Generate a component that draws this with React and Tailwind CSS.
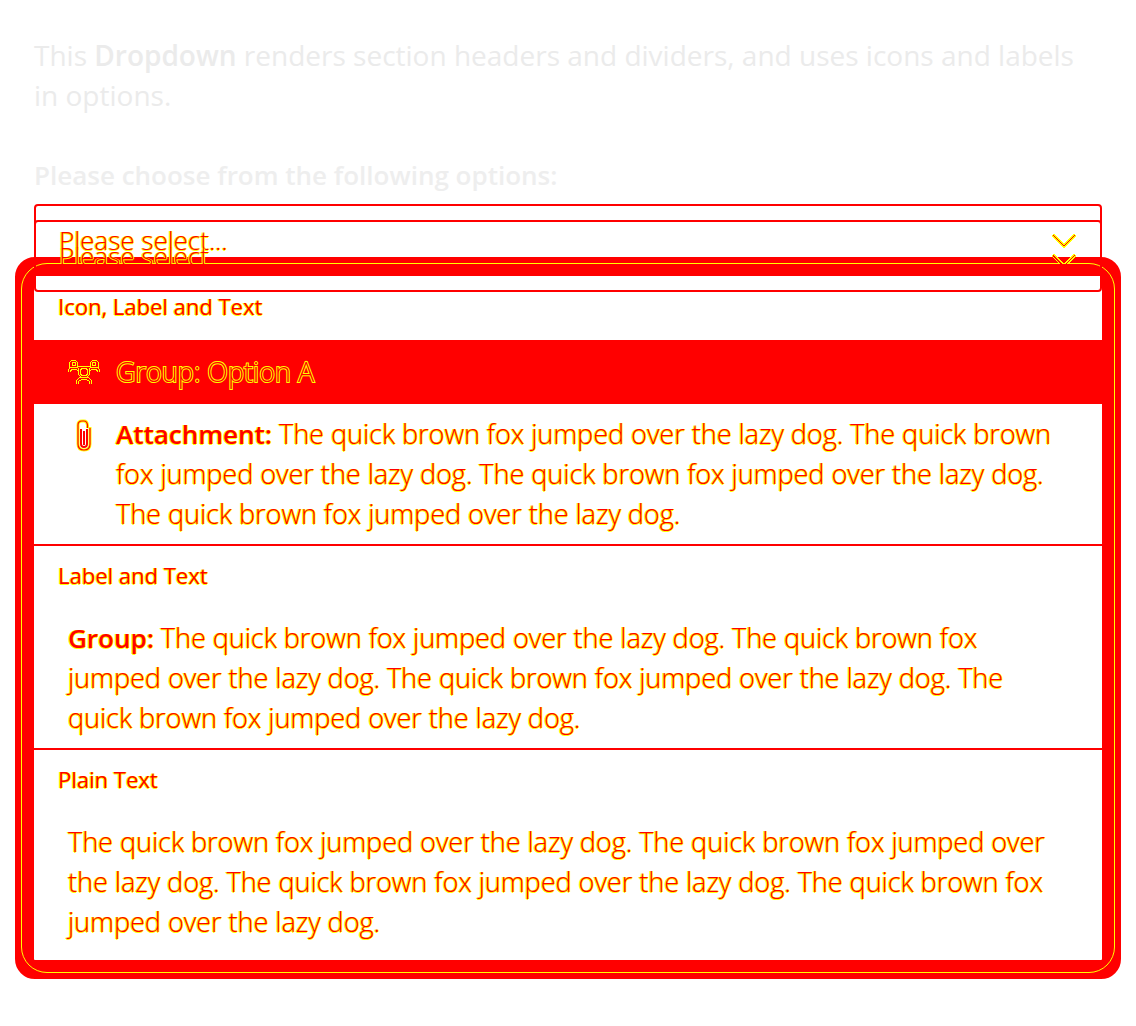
import React from "react";

const fox = "The quick brown fox jumped over the lazy dog.";
const edge =
  "text-[#ff0000] [text-shadow:1px_0_0_#ffff00,-1px_0_0_#ffff00,0_1px_0_#ffff00]";
const edgeOnRed =
  "text-[#ff0000] [-webkit-text-stroke:2px_#ffff00] [paint-order:stroke]";

function Chevron() {
  return (
    <svg width="26" height="16" viewBox="0 0 26 16" fill="none" shapeRendering="crispEdges" className="shrink-0">
      <path d="M2 3 13 14 24 3" stroke="#ffff00" strokeWidth="3.5" />
      <path d="M2 3 13 14 24 3" stroke="#ff0000" strokeWidth="1.4" />
    </svg>
  );
}

function GroupIcon() {
  return (
    <svg width="32" height="26" viewBox="0 0 32 26" fill="none" stroke="#ffff00" strokeWidth="1" shapeRendering="crispEdges" className="shrink-0">
      <path d="M1.500 8.500V3.500L3.500 1.500H7.500L9.500 3.500V8.500M30.500 8.500V3.500L28.500 1.500H24.500L22.500 3.500V8.500" />
      <rect x="4.500" y="3.500" width="3" height="3" />
      <rect x="24.500" y="3.500" width="3" height="3" />
      <path d="M.5 13V10.500L2.500 8.500H8.500L11.500 7.500H20.500L23.500 8.500H29.500L31.500 10.500V13" />
      <path d="M2.500 13V11.500L4.500 10.500H8.500L10.500 12.500M29.500 13V11.500L27.500 10.500H23.500L21.500 12.500" />
      <path d="M10.500 9V15.500L13.500 18.500H18.500L21.500 15.500V9" />
      <path d="M14 9.500H18L19.500 11V15L18 16.500H14L12.500 15V11Z" />
      <path d="M8.500 25V21.500L11.500 18.500H13.500M10.500 25V22.500L13.500 20.500H18.500L21.500 22.500V25M23.500 25V21.500L20.500 18.500H18.500" />
    </svg>
  );
}

function ClipIcon() {
  return (
    <svg width="16" height="34" viewBox="0 0 16 34" fill="none" className="shrink-0">
      <path d="M11.500 9V6Q11 2 8 2H6Q2 2 2 6V25Q2 31 8 31T14 25V8" stroke="#ffff00" strokeWidth="3" />
      <path d="M11.500 9V6Q11 2 8 2H6Q2 2 2 6V25Q2 31 8 31T14 25V9" stroke="#ff0000" strokeWidth="1.200" />
      <path d="M5 10V25Q5 28 8 28T11 25V10M8 12V26" stroke="#ff0000" strokeWidth="2" />
    </svg>
  );
}

function Header({ children, divided }) {
  return (
    <div
      className={`flex h-16 items-center border-[#ff0000] px-6 pb-1 text-[22px] font-medium ${edge} ${divided ? "border-t-2" : ""}`}
    >
      {children}
    </div>
  );
}

export default function App() {
  return (
    <main className="overflow-x-hidden bg-white px-[34px] pt-[35px] pb-12 font-['Open_Sans','Noto_Sans',sans-serif] text-[27px] leading-10">
      <p className="text-[28px] text-[#ebebeb]">
        This <strong className="font-semibold">Dropdown</strong> renders section headers and
        dividers, and uses icons and labels in options.
      </p>
      <label htmlFor="picker" className="mt-10 block text-[26px] font-semibold text-[#eeeeee]">
        Please choose from the following options:
      </label>
      <div className="relative mt-[9px] font-light">
        <button
          id="picker"
          type="button"
          aria-haspopup="listbox"
          aria-expanded="true"
          className={`flex h-[72px] w-full items-center justify-between rounded-sm border-2 border-[#ff0000] px-[23px] text-left text-[26px] ${edge}`}
        >
          Please select...
          <Chevron />
        </button>

        <div
          role="listbox"
          aria-labelledby="picker"
          className="relative -mx-[19px] -mt-[19px] rounded-[20px] border-[19px] border-[#ff0000] bg-white"
        >
          <div className="pointer-events-none absolute -inset-[13px] rounded-[26px] border border-[#ffff00]" />
          <div className="relative">
            <Header>Icon, Label and Text</Header>
            <div
              role="option"
              aria-selected="true"
              className={`flex h-16 items-center gap-4 bg-[#ff0000] px-[34px] ${edgeOnRed}`}
            >
              <GroupIcon />
              <span>Group: Option A</span>
            </div>
            <div
              role="option"
              aria-selected="false"
              className={`flex gap-4 py-[10px] pr-9 pl-[34px] ${edge}`}
            >
              <span className="flex w-8 shrink-0 justify-center pt-[5px]">
                <ClipIcon />
              </span>
              <span>
                <strong className="text-[26px] font-semibold">Attachment:</strong> {fox} {fox}{" "}
                {fox} {fox}
              </span>
            </div>
            <Header divided>Label and Text</Header>
            <div
              role="option"
              aria-selected="false"
              className={`py-[10px] pr-9 pl-[34px] ${edge}`}
            >
              <strong className="text-[26px] font-semibold">Group:</strong> {fox} {fox} {fox}{" "}
              {fox}
            </div>
            <Header divided>Plain Text</Header>
            <div
              role="option"
              aria-selected="false"
              className={`pt-[10px] pr-9 pb-[18px] pl-[34px] ${edge}`}
            >
              {fox} {fox} {fox} {fox}
            </div>
          </div>
        </div>

        <div
          aria-hidden="true"
          className={`pointer-events-none absolute inset-x-0 top-4 h-[72px] rounded-sm border-2 border-[#ff0000] text-[26px] ${edge}`}
        >
          <div className="flex h-[42px] items-start justify-between overflow-hidden px-[23px] pt-[14px]">
            Please select
            <span className="pt-4">
              <Chevron />
            </span>
          </div>
        </div>
      </div>
    </main>
  );
}
